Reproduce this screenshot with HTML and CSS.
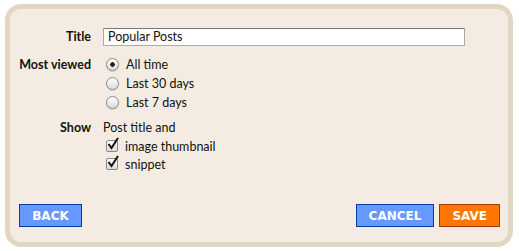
FILE: index.html
```html
<!DOCTYPE html>
<html lang="en">

<head>
    <meta charset="UTF-8">
    <title>Popular Posts</title>
    <link rel="stylesheet" href="styles.css">
</head>

<body>
    <div class="frame">
        <form class="widget-form" action="#">
            <div class="row title-row">
                <label class="field-label" for="title">Title</label>
                <input type="text" id="title" class="text-input" value="Popular Posts">
            </div>

            <div class="row">
                <span class="field-label">Most viewed</span>
                <div class="options">
                    <label class="option"><span class="radio checked"></span>All time</label>
                    <label class="option"><span class="radio"></span>Last 30 days</label>
                    <label class="option"><span class="radio"></span>Last 7 days</label>
                </div>
            </div>

            <div class="row show-row">
                <span class="field-label">Show</span>
                <div class="options">
                    <div class="plain">Post title and</div>
                    <label class="option check-option">
                        <span class="checkbox">
                            <svg width="14" height="14" viewBox="0 0 14 14"><path d="M2.5 7 L5.5 11 L12 1" fill="none" stroke="#111" stroke-width="2"/></svg>
                        </span>image thumbnail
                    </label>
                    <label class="option check-option">
                        <span class="checkbox">
                            <svg width="14" height="14" viewBox="0 0 14 14"><path d="M2.5 7 L5.5 11 L12 1" fill="none" stroke="#111" stroke-width="2"/></svg>
                        </span>snippet
                    </label>
                </div>
            </div>

            <div class="actions">
                <button type="button" class="btn blue">BACK</button>
                <div class="right-btns">
                    <button type="button" class="btn blue">CANCEL</button>
                    <button type="submit" class="btn orange">SAVE</button>
                </div>
            </div>
        </form>
    </div>
</body>

</html>
```

FILE: styles.css
```css
* {
    box-sizing: border-box;
}

body {
    margin: 0;
    background: #fff;
    font-family: Lato, "Open Sans", sans-serif;
    font-size: 12.5px;
    color: #111;
}

.frame {
    margin: 4px 6px 4px 5px;
    height: 243px;
    border: 5px solid #e2d6c3;
    border-radius: 16px;
    background: #f4ece3;
}

.widget-form {
    display: flex;
    flex-direction: column;
    height: 100%;
    padding: 18px 8px 15px 9px;
}

.row {
    display: grid;
    grid-template-columns: 81px 1fr;
    column-gap: 12px;
    margin: 0 0 6px -9px;
}

.title-row {
    align-items: center;
    margin-bottom: 9px;
}

.show-row {
    margin-bottom: 0;
}

.field-label {
    text-align: right;
    font-weight: bold;
    line-height: 19px;
    white-space: nowrap;
}

.text-input {
    width: 362px;
    height: 18px;
    padding: 0 4px;
    border: 1px solid #aaa;
    border-top-color: #777;
    background: #fff;
    font-family: inherit;
    font-size: 12.5px;
    color: #111;
}

.options {
    display: flex;
    flex-direction: column;
}

.option,
.plain {
    display: flex;
    align-items: center;
    height: 19px;
}

.check-option {
    height: 18px;
}

.radio {
    width: 13px;
    height: 13px;
    margin: 0 7px 0 3px;
    border: 1px solid #8a8a8a;
    border-radius: 50%;
    background: linear-gradient(#fdfdfd, #dcdcdc);
    box-shadow: 0 1px 1px rgba(0, 0, 0, 0.15);
}

.radio.checked {
    background: radial-gradient(circle, #222 0, #222 2px, transparent 2.5px), linear-gradient(#fdfdfd, #dcdcdc);
}

.checkbox {
    position: relative;
    width: 12px;
    height: 12px;
    margin: 0 7px 0 3px;
    border: 1px solid #8a8a8a;
    border-radius: 2px;
    background: linear-gradient(#fdfdfd, #dcdcdc);
}

.checkbox svg {
    position: absolute;
    left: -1px;
    top: -4px;
}

.actions {
    display: flex;
    justify-content: space-between;
    align-items: flex-end;
    margin-top: auto;
}

.right-btns {
    display: flex;
    gap: 5px;
}

.btn {
    height: 23px;
    padding: 0 12px;
    border: 1px solid #0c3a9c;
    color: #fff;
    font-family: "DejaVu Sans", sans-serif;
    font-size: 12px;
    font-weight: bold;
    cursor: pointer;
}

.btn.blue {
    min-width: 63px;
    background: #6699ff;
}

.btn.blue:last-child {
    min-width: 80px;
}

.btn.orange {
    min-width: 60px;
    background: #ff7700;
    border-color: #a33a00;
}
```
